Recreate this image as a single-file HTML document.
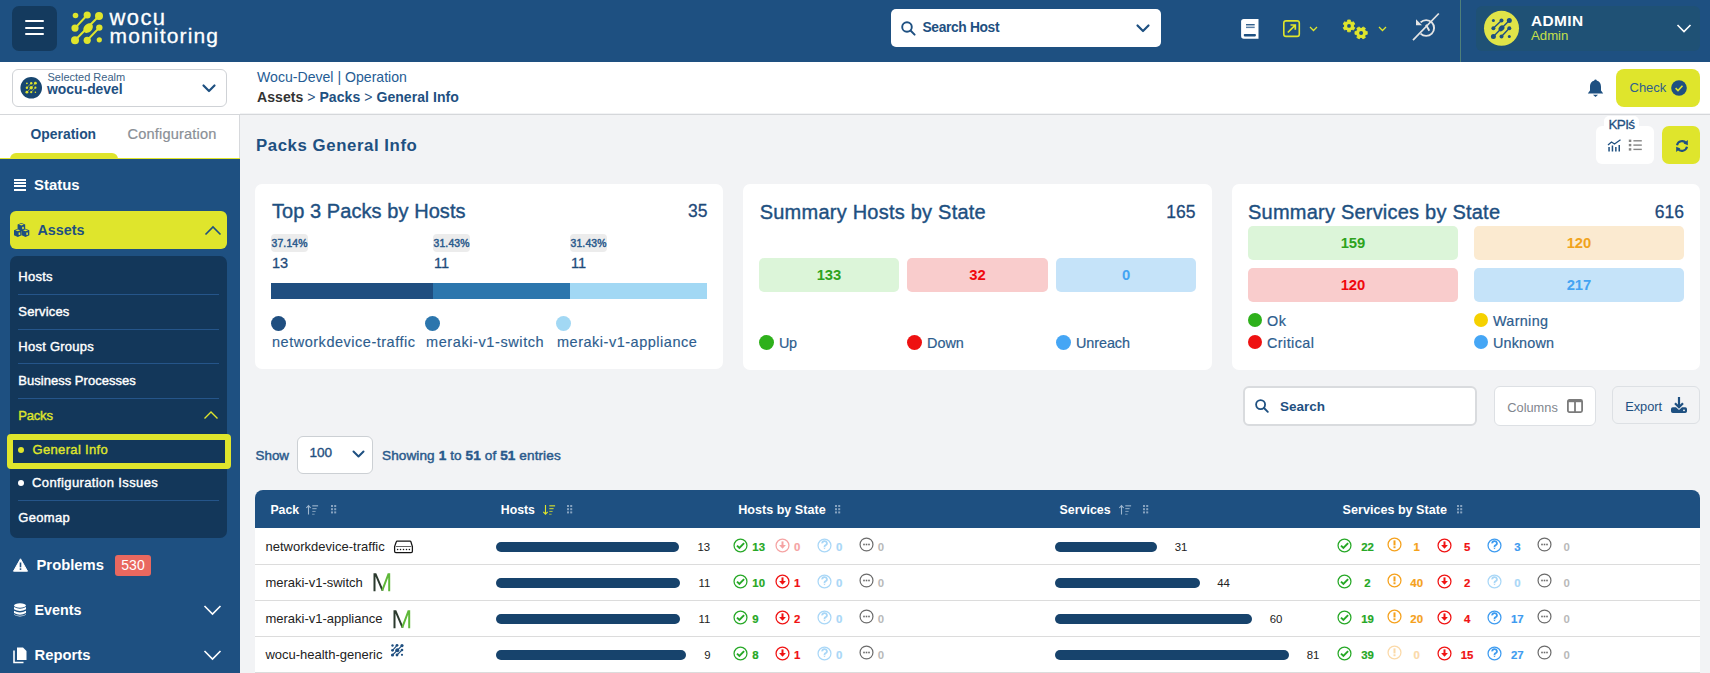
<!DOCTYPE html>
<html><head><meta charset="utf-8"><style>
html,body{margin:0;padding:0;width:1710px;height:673px;overflow:hidden;background:#f2f3f5;font-family:"Liberation Sans",sans-serif;}
.t{position:absolute;line-height:1;white-space:nowrap;}
.r{position:absolute;}
svg.r{overflow:visible}
</style></head><body>
<div class="r" style="left:0px;top:0px;width:1710px;height:62px;background:#1e5081;"></div>
<div class="r" style="left:12px;top:6px;width:45px;height:45px;background:#143a5e;border-radius:7px"></div>
<div class="r" style="left:25px;top:20px;width:19px;height:2.4px;background:#fff;border-radius:1px"></div>
<div class="r" style="left:25px;top:27px;width:19px;height:2.4px;background:#fff;border-radius:1px"></div>
<div class="r" style="left:25px;top:33px;width:19px;height:2.4px;background:#fff;border-radius:1px"></div>
<svg class="r" style="left:68px;top:8px;" width="40" height="44" viewBox="0 0 40 44">
<g fill="#dfe52c" stroke="#dfe52c">
<circle cx="7.5" cy="7.5" r="2.8" stroke="none"/>
<circle cx="19.2" cy="7" r="3.6" stroke="none"/>
<circle cx="31" cy="8" r="4" stroke="none"/>
<circle cx="7" cy="20.1" r="3.6" stroke="none"/>
<ellipse cx="20.1" cy="20.1" rx="5.5" ry="4" transform="rotate(-45 20.1 20.1)" stroke="none"/>
<circle cx="31.3" cy="19.6" r="3.2" stroke="none"/>
<circle cx="7" cy="32.3" r="4" stroke="none"/>
<circle cx="19.2" cy="32.3" r="3.6" stroke="none"/>
<circle cx="31.3" cy="31.8" r="2.6" stroke="none"/>
<path d="M19.2 7 L7 20.1 M31 8 L7 32.3 M31.3 19.6 L19.2 32.3" stroke-width="2" fill="none"/>
</g></svg>
<div class="t" style="left:109.50px;top:7px;font-size:22px;font-weight:400;color:#fff;-webkit-text-stroke:0.3px #fff;letter-spacing:1.380px;">wocu</div>
<div class="t" style="left:109.50px;top:25px;font-size:21px;font-weight:400;color:#fff;-webkit-text-stroke:0.3px #fff;letter-spacing:1.161px;">monitoring</div>
<div class="r" style="left:891px;top:9px;width:270px;height:38px;background:#fff;border-radius:5px"></div>
<svg class="r" style="left:901px;top:21px;" width="15" height="15" viewBox="0 0 15 15"><circle cx="6" cy="6" r="4.8" fill="none" stroke="#1e5081" stroke-width="1.9"/><path d="M9.5 9.5 L13.6 13.6" stroke="#1e5081" stroke-width="2" stroke-linecap="round"/></svg>
<div class="t" style="left:922.50px;top:21px;font-size:13.8px;font-weight:700;color:#1e5081;letter-spacing:-0.353px;">Search Host</div>
<svg class="r" style="left:1136px;top:24px;" width="14" height="9" viewBox="0 0 14 9"><path d="M1.5 1.5 L7 7 L12.5 1.5" fill="none" stroke="#1e5081" stroke-width="2.2" stroke-linecap="round" stroke-linejoin="round"/></svg>
<svg class="r" style="left:1240px;top:18px;" width="20" height="22" viewBox="0 0 20 22"><path d="M3.8 0.9 H18.5 V20.8 H3.8 A2.7 2.7 0 0 1 1.1 18.1 V3.6 A2.7 2.7 0 0 1 3.8 0.9 Z" fill="#fff"/><rect x="6" y="6.1" width="8.7" height="1.3" fill="#1e5081"/><rect x="6" y="8.6" width="8.7" height="1.5" fill="#5a7fa5"/><rect x="3.8" y="15.9" width="12.1" height="2.5" rx="0.8" fill="#1e5081"/></svg>
<svg class="r" style="left:1282px;top:19px;" width="19" height="19" viewBox="0 0 19 19"><rect x="1.8" y="1.9" width="15.5" height="15.5" rx="2.2" fill="none" stroke="#dfe52c" stroke-width="1.6"/><path d="M5.8 13.5 L13 6.3 M8.5 6 H13.3 V10.8" fill="none" stroke="#dfe52c" stroke-width="1.7"/></svg>
<svg class="r" style="left:1309px;top:26px;" width="9" height="6" viewBox="0 0 9 6"><path d="M1 1 L4.5 4.5 L8 1" fill="none" stroke="#dfe52c" stroke-width="1.3"/></svg>
<svg class="r" style="left:1338px;top:14px;" width="34" height="28" viewBox="0 0 34 28"><polygon points="9.46,7.66 9.63,5.96 12.37,5.96 12.54,7.66 13.90,8.44 15.46,7.74 16.83,10.12 15.45,11.12 15.45,12.68 16.83,13.68 15.46,16.06 13.90,15.36 12.54,16.14 12.37,17.84 9.63,17.84 9.46,16.14 8.10,15.36 6.54,16.06 5.17,13.68 6.55,12.68 6.55,11.12 5.17,10.12 6.54,7.74 8.10,8.44" fill="#dfe52c" stroke="#dfe52c" stroke-width="0.8" stroke-linejoin="round"/><circle cx="11" cy="11.9" r="4.76" fill="#dfe52c"/><circle cx="11" cy="11.9" r="1.9" fill="#1e5081"/><polygon points="27.48,17.31 29.24,17.48 29.24,20.32 27.48,20.49 26.67,21.90 27.40,23.51 24.94,24.92 23.91,23.49 22.29,23.49 21.26,24.92 18.80,23.51 19.53,21.90 18.72,20.49 16.96,20.32 16.96,17.48 18.72,17.31 19.53,15.90 18.80,14.29 21.26,12.88 22.29,14.31 23.91,14.31 24.94,12.88 27.40,14.29 26.67,15.90" fill="#dfe52c" stroke="#dfe52c" stroke-width="0.8" stroke-linejoin="round"/><circle cx="23.1" cy="18.9" r="4.91" fill="#dfe52c"/><circle cx="23.1" cy="18.9" r="2" fill="#1e5081"/></svg>
<svg class="r" style="left:1378px;top:26px;" width="9" height="6" viewBox="0 0 9 6"><path d="M1 1 L4.5 4.5 L8 1" fill="none" stroke="#dfe52c" stroke-width="1.3"/></svg>
<svg class="r" style="left:1405px;top:8px;" width="40" height="38" viewBox="0 0 40 38"><g fill="none" stroke="#e4e4e4" stroke-width="1.9"><path d="M15.6 14.4 A7.9 7.9 0 1 1 15.6 25.6"/><path d="M21 16.8 L24.3 22.8"/><path d="M8 32.2 L33.8 5.5" stroke-width="1.7"/></g><path d="M11 11.2 V17.2 H17 Z" fill="#e4e4e4"/></svg>
<div class="r" style="left:1460px;top:0px;width:1px;height:62px;background:#4f7f7a;"></div>
<div class="r" style="left:1476px;top:6px;width:224px;height:45px;background:#1f5175;border-radius:6px"></div>
<svg class="r" style="left:1484px;top:11px;" width="35" height="35" viewBox="0 0 35 35"><circle cx="17.5" cy="17.3" r="17.5" fill="#e0e448"/><g fill="#1e5081" stroke="#1e5081"><circle cx="9.4" cy="9.5" r="1.5" stroke="none"/><circle cx="17.5" cy="9.5" r="2" stroke="none"/><circle cx="25.3" cy="9.5" r="2.5" stroke="none"/><circle cx="9.4" cy="17.3" r="2" stroke="none"/><ellipse cx="17.5" cy="17.3" rx="3.3" ry="2.5" transform="rotate(-45 17.5 17.3)" stroke="none"/><circle cx="25.3" cy="17.3" r="2" stroke="none"/><circle cx="9.4" cy="25.4" r="2.5" stroke="none"/><circle cx="17.5" cy="25.4" r="2" stroke="none"/><circle cx="25.3" cy="25.4" r="1.5" stroke="none"/><path d="M17.5 9.5 L9.4 17.3 M25.3 9.5 L9.4 25.4 M25.3 17.3 L17.5 25.4" stroke-width="1.4" fill="none"/></g></svg>
<div class="t" style="left:1531.00px;top:13px;font-size:15.4px;font-weight:700;color:#fff;letter-spacing:0.4px">ADMIN</div>
<div class="t" style="left:1531.00px;top:29px;font-size:13.2px;font-weight:400;color:#c6e04a;">Admin</div>
<svg class="r" style="left:1676px;top:23px;" width="16" height="11" viewBox="0 0 16 11"><path d="M1.5 2 L8 8.5 L14.5 2" fill="none" stroke="#fff" stroke-width="1.6"/></svg>
<div class="r" style="left:0px;top:62px;width:240px;height:52px;background:#fff;"></div>
<div class="r" style="left:12px;top:69px;width:215px;height:38px;background:#fff;border:1px solid #cfd2d6;border-radius:6px;box-sizing:border-box"></div>
<svg class="r" style="left:20px;top:77px;" width="22" height="22" viewBox="0 0 22 22"><circle cx="11.2" cy="10.8" r="10.8" fill="#174670"/><g fill="#dfe52c"><circle cx="6.9" cy="6.3" r="0.9"/><circle cx="11.2" cy="6.2" r="1.2"/><circle cx="15.4" cy="6.2" r="1.4"/><circle cx="6.9" cy="10.7" r="1.2"/><circle cx="11.2" cy="10.7" r="1.7"/><circle cx="15.4" cy="10.7" r="1.1"/><circle cx="6.9" cy="15.2" r="1.4"/><circle cx="11.2" cy="15.2" r="1.1"/><circle cx="15.4" cy="15.2" r="0.8"/></g><path d="M11.2 6.2 L6.9 10.7 M15.4 6.2 L6.9 15.2 M15.4 10.7 L11.2 15.2" stroke="#dfe52c" stroke-width="0.7" opacity="0.8"/></svg>
<div class="t" style="left:47.50px;top:72px;font-size:11px;font-weight:400;color:#3b5f86;">Selected Realm</div>
<div class="t" style="left:47.00px;top:83px;font-size:13.9px;font-weight:700;color:#1e5081;">wocu-devel</div>
<svg class="r" style="left:202px;top:84px;" width="14" height="9" viewBox="0 0 14 9"><path d="M1.5 1.5 L7 7 L12.5 1.5" fill="none" stroke="#1e5081" stroke-width="2.2" stroke-linecap="round" stroke-linejoin="round"/></svg>
<div class="r" style="left:0px;top:114px;width:240px;height:1px;background:#d5d7da;"></div>
<div class="r" style="left:0px;top:115px;width:239px;height:43px;background:#fff;"></div>
<div class="r" style="left:239px;top:115px;width:1px;height:43px;background:#d7d9dc;"></div>
<div class="t" style="left:30.50px;top:128px;font-size:13.9px;font-weight:700;color:#1e5081;">Operation</div>
<div class="t" style="left:127.50px;top:127px;font-size:14.6px;font-weight:400;color:#8a8f96;letter-spacing:0.17px;-webkit-text-stroke:0.2px currentColor;">Configuration</div>
<div class="r" style="left:10px;top:153px;width:108px;height:6px;background:#dfe52c;border-radius:6px 6px 0 0"></div>
<div class="r" style="left:0px;top:158px;width:240px;height:1px;background:#dfe52c;"></div>
<div class="r" style="left:0px;top:159px;width:240px;height:514px;background:#1e5081;"></div>
<div class="r" style="left:14px;top:179px;width:12px;height:2.2px;background:#fff;"></div>
<div class="r" style="left:14px;top:182px;width:12px;height:2.2px;background:#fff;"></div>
<div class="r" style="left:14px;top:185px;width:12px;height:2.2px;background:#fff;"></div>
<div class="r" style="left:14px;top:188.5px;width:12px;height:2.6px;background:#fff;"></div>
<div class="t" style="left:34.00px;top:178px;font-size:14.9px;font-weight:700;color:#fff;">Status</div>
<div class="r" style="left:10px;top:211px;width:217px;height:38px;background:#dfe52c;border-radius:6px"></div>
<svg class="r" style="left:14px;top:223px;" width="16" height="14" viewBox="0 0 16 14"><path d="M3.6 1.6 L7.4 0 L11.2 1.6 V6.6 L7.4 8.2 L3.6 6.6 Z" fill="#1e5081"/><path d="M4.9 1.6 L7.4 0.8 L9.9 1.6 L7.4 2.5 Z" fill="#dfe52c"/><rect x="8.2" y="3.8" width="1.6" height="2.4" fill="#dfe52c"/><path d="M0 7.300000000000001 L3.8 5.7 L7.6 7.300000000000001 V12.3 L3.8 13.899999999999999 L0 12.3 Z" fill="#1e5081"/><path d="M1.3 7.300000000000001 L3.8 6.5 L6.3 7.300000000000001 L3.8 8.2 Z" fill="#dfe52c"/><rect x="4.6" y="9.5" width="1.6" height="2.4" fill="#dfe52c"/><path d="M7.7 7.300000000000001 L11.5 5.7 L15.3 7.300000000000001 V12.3 L11.5 13.899999999999999 L7.7 12.3 Z" fill="#1e5081"/><path d="M9.0 7.300000000000001 L11.5 6.5 L14.0 7.300000000000001 L11.5 8.2 Z" fill="#dfe52c"/><rect x="12.3" y="9.5" width="1.6" height="2.4" fill="#dfe52c"/></svg>
<div class="t" style="left:37.50px;top:223px;font-size:14.3px;font-weight:700;color:#1e5081;">Assets</div>
<svg class="r" style="left:204px;top:225px;" width="18" height="11" viewBox="0 0 18 11"><path d="M1.5 9.5 L9 2 L16.5 9.5" fill="none" stroke="#1e5081" stroke-width="1.6"/></svg>
<div class="r" style="left:10px;top:256px;width:217px;height:282px;background:#13375a;border-radius:7px"></div>
<div class="t" style="left:18.30px;top:270px;font-size:13px;font-weight:400;color:#fff;-webkit-text-stroke:0.4px currentColor;letter-spacing:0.242px;">Hosts</div>
<div class="t" style="left:18.30px;top:305px;font-size:13px;font-weight:400;color:#fff;-webkit-text-stroke:0.4px currentColor;letter-spacing:0.164px;">Services</div>
<div class="t" style="left:18.30px;top:340px;font-size:13px;font-weight:400;color:#fff;-webkit-text-stroke:0.4px currentColor;letter-spacing:0.253px;">Host Groups</div>
<div class="t" style="left:18.30px;top:374px;font-size:13px;font-weight:400;color:#fff;-webkit-text-stroke:0.4px currentColor;letter-spacing:0.020px;">Business Processes</div>
<div class="r" style="left:18px;top:294px;width:201px;height:1px;background:#25558a;"></div>
<div class="r" style="left:18px;top:329px;width:201px;height:1px;background:#25558a;"></div>
<div class="r" style="left:18px;top:363px;width:201px;height:1px;background:#25558a;"></div>
<div class="r" style="left:18px;top:398px;width:201px;height:1px;background:#25558a;"></div>
<div class="t" style="left:18.30px;top:409px;font-size:13px;font-weight:400;color:#dfe52c;-webkit-text-stroke:0.4px currentColor;letter-spacing:-0.200px;">Packs</div>
<svg class="r" style="left:203px;top:410px;" width="16" height="10" viewBox="0 0 16 10"><path d="M1.5 8.5 L8 2 L14.5 8.5" fill="none" stroke="#dfe52c" stroke-width="1.4"/></svg>
<div class="r" style="left:7px;top:434px;width:224px;height:35px;background:#13375a;border:6.5px solid #dfe52c;border-radius:4px;box-sizing:border-box"></div>
<div class="r" style="left:18px;top:447px;width:6px;height:6px;background:#dfe52c;border-radius:50%"></div>
<div class="t" style="left:32.50px;top:443px;font-size:13px;font-weight:400;color:#dfe52c;-webkit-text-stroke:0.4px currentColor;letter-spacing:0.341px;">General Info</div>
<div class="r" style="left:18px;top:480px;width:6px;height:6px;background:#fff;border-radius:50%"></div>
<div class="t" style="left:32.00px;top:476px;font-size:13px;font-weight:400;color:#fff;-webkit-text-stroke:0.4px currentColor;letter-spacing:0.384px;">Configuration Issues</div>
<div class="r" style="left:18px;top:500px;width:201px;height:1px;background:#25558a;"></div>
<div class="t" style="left:18.30px;top:511px;font-size:13px;font-weight:400;color:#fff;-webkit-text-stroke:0.4px currentColor;letter-spacing:0.328px;">Geomap</div>
<svg class="r" style="left:13px;top:558px;" width="15" height="14" viewBox="0 0 15 14"><path d="M7.5 0.8 L14.5 13.2 H0.5 Z" fill="#fff" stroke="#fff" stroke-width="1" stroke-linejoin="round"/><rect x="6.7" y="4.5" width="1.6" height="4.8" fill="#1e5081"/><rect x="6.7" y="10.3" width="1.6" height="1.6" fill="#1e5081"/></svg>
<div class="t" style="left:36.50px;top:558px;font-size:14.8px;font-weight:700;color:#fff;">Problems</div>
<div class="r" style="left:115px;top:555px;width:36px;height:21px;background:#e9685f;border-radius:3px"></div>
<div class="t" style="left:115.00px;width:36px;text-align:center;top:558px;font-size:14px;font-weight:400;color:#fff;">530</div>
<svg class="r" style="left:13px;top:603px;" width="14" height="14" viewBox="0 0 14 14"><g fill="#fff"><ellipse cx="7" cy="2.5" rx="6" ry="2.2"/><path d="M1 4 Q7 7.5 13 4 V6.3 Q7 9.8 1 6.3 Z"/><path d="M1 7.8 Q7 11.3 13 7.8 V10 Q7 13.5 1 10 Z"/><path d="M1 11.2 Q7 14.5 13 11.2 V11.8 Q7 15 1 11.8Z"/></g></svg>
<div class="t" style="left:34.50px;top:603px;font-size:14.3px;font-weight:700;color:#fff;">Events</div>
<svg class="r" style="left:203px;top:604px;" width="19" height="12" viewBox="0 0 19 12"><path d="M1.5 2 L9.5 10 L17.5 2" fill="none" stroke="#fff" stroke-width="1.6"/></svg>
<svg class="r" style="left:13px;top:647px;" width="14" height="16" viewBox="0 0 14 16"><path d="M4 0.5 H10 L13.5 4 V13 H4 Z" fill="#fff"/><path d="M1 3.5 V15.5 H10.5" fill="none" stroke="#fff" stroke-width="1.6"/></svg>
<div class="t" style="left:34.50px;top:648px;font-size:14.8px;font-weight:700;color:#fff;">Reports</div>
<svg class="r" style="left:203px;top:649px;" width="19" height="12" viewBox="0 0 19 12"><path d="M1.5 2 L9.5 10 L17.5 2" fill="none" stroke="#fff" stroke-width="1.6"/></svg>
<div class="r" style="left:240px;top:62px;width:1470px;height:51px;background:#fff;"></div>
<div class="r" style="left:240px;top:114px;width:1470px;height:1px;background:#d5d7da;"></div>
<div class="r" style="left:240px;top:115px;width:1470px;height:558px;background:#f2f3f5;"></div>
<div class="t" style="left:257.00px;top:70px;font-size:14.1px;font-weight:400;color:#255c94;">Wocu-Devel | Operation</div>
<div class="t" style="left:257.00px;top:90px;font-size:14.05px;font-weight:700;color:#1e5081;letter-spacing:0.04px"><span style="color:#333">Assets</span> <span style="font-weight:400">&gt;</span> Packs <span style="font-weight:400">&gt;</span> General Info</div>
<svg class="r" style="left:1587px;top:79px;" width="17" height="19" viewBox="0 0 17 19"><path d="M8.5 1.5 C4.5 1.5 3 4.5 3 8 V11.5 L0.8 14.5 H16.2 L14 11.5 V8 C14 4.5 12.5 1.5 8.5 1.5 Z" fill="#1e5081"/><circle cx="8.5" cy="1.6" r="1.2" fill="#1e5081"/><path d="M6 15.8 H11 L8.5 18 Z" fill="#1e5081"/></svg>
<div class="r" style="left:1616px;top:69px;width:84px;height:38px;background:#dfe52c;border-radius:8px"></div>
<div class="t" style="left:1629.50px;top:81px;font-size:13px;font-weight:400;color:#2f5f8c;">Check</div>
<svg class="r" style="left:1671px;top:80px;" width="16" height="16" viewBox="0 0 16 16"><circle cx="8" cy="8" r="7.8" fill="#1e5081"/><path d="M4.6 8.2 L7 10.5 L11.5 5.8" fill="none" stroke="#dfe52c" stroke-width="1.6"/></svg>
<div class="t" style="left:256.00px;top:138px;font-size:16.8px;font-weight:700;color:#1e5081;letter-spacing:0.572px;">Packs General Info</div>
<div class="r" style="left:1596px;top:126px;width:58px;height:38px;background:#fff;border-radius:6px"></div>
<div class="r" style="left:1604px;top:115.5px;width:35px;height:14px;background:#fff;border-radius:5px 5px 0 0"></div>
<div class="t" style="left:1608.50px;top:118px;font-size:13.5px;font-weight:400;color:#1e5081;-webkit-text-stroke:0.3px currentColor;letter-spacing:-0.670px;">KPI&#347;</div>
<svg class="r" style="left:1607px;top:139px;" width="15" height="13" viewBox="0 0 15 13"><path d="M1 6 L4.5 3 L7.5 5 L13.5 0.8" fill="none" stroke="#1e5081" stroke-width="1.3"/><rect x="1.3" y="8" width="1.5" height="4.5" fill="#1e5081"/><rect x="4.7" y="6.5" width="1.5" height="6" fill="#1e5081"/><rect x="8.1" y="8" width="1.5" height="4.5" fill="#1e5081"/><rect x="11.5" y="6" width="1.5" height="6.5" fill="#1e5081"/></svg>
<svg class="r" style="left:1628px;top:139px;" width="15" height="12" viewBox="0 0 15 12"><g fill="#858585"><rect x="0.8" y="0.6" width="2.5" height="2.4"/><rect x="0.8" y="4.9" width="2.5" height="2.4"/><rect x="0.8" y="9.2" width="2.5" height="2.4"/><rect x="5.4" y="1.1" width="8.4" height="1.4"/><rect x="5.4" y="5.4" width="8.4" height="1.4"/><rect x="5.4" y="9.7" width="8.4" height="1.4"/></g></svg>
<div class="r" style="left:1662px;top:126px;width:38px;height:38px;background:#dfe52c;border-radius:7px"></div>
<svg class="r" style="left:1674.5px;top:138.5px;" width="14" height="14" viewBox="0 0 14 14"><g fill="none" stroke="#1e5081" stroke-width="2.1"><path d="M2 6.2 A5.2 5.2 0 0 1 11.2 4.2"/><path d="M12 7.8 A5.2 5.2 0 0 1 2.8 9.8"/></g><path d="M8.6 4.6 L12.8 1 L12.8 6.2 Z" fill="#1e5081"/><path d="M5.4 9.4 L1.2 13 L1.2 7.8 Z" fill="#1e5081"/></svg>
<div class="r" style="left:255px;top:184px;width:468px;height:185px;background:#fff;border-radius:7px"></div>
<div class="t" style="left:272.00px;top:201px;font-size:20px;font-weight:400;color:#1e5081;-webkit-text-stroke:0.4px currentColor;letter-spacing:0.063px;">Top 3 Packs by Hosts</div>
<div class="t" style="left:407.50px;width:300px;text-align:right;top:203px;font-size:17.5px;font-weight:400;color:#1e4a7a;-webkit-text-stroke:0.3px currentColor;">35</div>
<div class="r" style="left:271px;top:234px;width:37px;height:18px;background:#ececec;border-radius:4px"></div>
<div class="t" style="left:271.50px;top:239px;font-size:10.4px;font-weight:400;color:#2a5a8c;-webkit-text-stroke:0.45px currentColor;letter-spacing:0.145px;">37.14%</div>
<div class="t" style="left:272.00px;top:256px;font-size:14.5px;font-weight:400;color:#1e4a7a;-webkit-text-stroke:0.3px currentColor;">13</div>
<div class="r" style="left:433px;top:234px;width:37px;height:18px;background:#ececec;border-radius:4px"></div>
<div class="t" style="left:433.50px;top:239px;font-size:10.4px;font-weight:400;color:#2a5a8c;-webkit-text-stroke:0.45px currentColor;letter-spacing:0.145px;">31.43%</div>
<div class="t" style="left:434.00px;top:256px;font-size:14.5px;font-weight:400;color:#1e4a7a;-webkit-text-stroke:0.3px currentColor;">11</div>
<div class="r" style="left:570px;top:234px;width:37px;height:18px;background:#ececec;border-radius:4px"></div>
<div class="t" style="left:570.50px;top:239px;font-size:10.4px;font-weight:400;color:#2a5a8c;-webkit-text-stroke:0.45px currentColor;letter-spacing:0.145px;">31.43%</div>
<div class="t" style="left:571.00px;top:256px;font-size:14.5px;font-weight:400;color:#1e4a7a;-webkit-text-stroke:0.3px currentColor;">11</div>
<div class="r" style="left:271px;top:283px;width:162px;height:16px;background:#1f4e80;"></div>
<div class="r" style="left:433px;top:283px;width:137px;height:16px;background:#2c76ad;"></div>
<div class="r" style="left:570px;top:283px;width:137px;height:16px;background:#a2d8f4;"></div>
<div class="r" style="left:271px;top:316px;width:15px;height:15px;background:#1f4e80;border-radius:50%"></div>
<div class="t" style="left:272.00px;top:335px;font-size:14.5px;font-weight:400;color:#2d5d8e;-webkit-text-stroke:0.15px currentColor;letter-spacing:0.515px;">networkdevice-traffic</div>
<div class="r" style="left:425px;top:316px;width:15px;height:15px;background:#2c76ad;border-radius:50%"></div>
<div class="t" style="left:426.00px;top:335px;font-size:14.5px;font-weight:400;color:#2d5d8e;-webkit-text-stroke:0.15px currentColor;letter-spacing:0.595px;">meraki-v1-switch</div>
<div class="r" style="left:556px;top:316px;width:15px;height:15px;background:#a2d8f4;border-radius:50%"></div>
<div class="t" style="left:557.00px;top:335px;font-size:14.5px;font-weight:400;color:#2d5d8e;-webkit-text-stroke:0.15px currentColor;letter-spacing:0.513px;">meraki-v1-appliance</div>
<div class="r" style="left:743px;top:184px;width:469px;height:186px;background:#fff;border-radius:7px"></div>
<div class="t" style="left:759.70px;top:202px;font-size:20px;font-weight:400;color:#1e5081;-webkit-text-stroke:0.4px currentColor;letter-spacing:0.229px;">Summary Hosts by State</div>
<div class="t" style="left:895.50px;width:300px;text-align:right;top:204px;font-size:17.5px;font-weight:400;color:#1e4a7a;-webkit-text-stroke:0.3px currentColor;">165</div>
<div class="r" style="left:759px;top:258px;width:140px;height:34px;background:#dcf5d9;border-radius:5px"></div>
<div class="t" style="left:759.00px;width:140px;text-align:center;top:268px;font-size:14.8px;font-weight:700;color:#2ea31e;">133</div>
<div class="r" style="left:907px;top:258px;width:141px;height:34px;background:#f9cccc;border-radius:5px"></div>
<div class="t" style="left:907.00px;width:141px;text-align:center;top:268px;font-size:14.8px;font-weight:700;color:#f0080e;">32</div>
<div class="r" style="left:1056px;top:258px;width:140px;height:34px;background:#c5e3f9;border-radius:5px"></div>
<div class="t" style="left:1056.00px;width:140px;text-align:center;top:268px;font-size:14.8px;font-weight:700;color:#44a4f2;">0</div>
<div class="r" style="left:759px;top:335px;width:15px;height:15px;background:#2eb01b;border-radius:50%"></div>
<div class="t" style="left:779.00px;top:336px;font-size:14.4px;font-weight:400;color:#2d5d8e;-webkit-text-stroke:0.2px currentColor;letter-spacing:-0.408px;">Up</div>
<div class="r" style="left:907px;top:335px;width:15px;height:15px;background:#ee1111;border-radius:50%"></div>
<div class="t" style="left:927.00px;top:336px;font-size:14.4px;font-weight:400;color:#2d5d8e;-webkit-text-stroke:0.2px currentColor;letter-spacing:-0.006px;">Down</div>
<div class="r" style="left:1056px;top:335px;width:15px;height:15px;background:#45a6f5;border-radius:50%"></div>
<div class="t" style="left:1076.00px;top:336px;font-size:14.4px;font-weight:400;color:#2d5d8e;-webkit-text-stroke:0.2px currentColor;letter-spacing:-0.072px;">Unreach</div>
<div class="r" style="left:1232px;top:184px;width:468px;height:186px;background:#fff;border-radius:7px"></div>
<div class="t" style="left:1248.00px;top:202px;font-size:20px;font-weight:400;color:#1e5081;-webkit-text-stroke:0.4px currentColor;letter-spacing:0.219px;">Summary Services by State</div>
<div class="t" style="left:1384.00px;width:300px;text-align:right;top:204px;font-size:17.5px;font-weight:400;color:#1e4a7a;-webkit-text-stroke:0.3px currentColor;">616</div>
<div class="r" style="left:1248px;top:226px;width:210px;height:34px;background:#dcf5d9;border-radius:5px"></div>
<div class="t" style="left:1248.00px;width:210px;text-align:center;top:236px;font-size:14.8px;font-weight:700;color:#2ea31e;">159</div>
<div class="r" style="left:1474px;top:226px;width:210px;height:34px;background:#fbead0;border-radius:5px"></div>
<div class="t" style="left:1474.00px;width:210px;text-align:center;top:236px;font-size:14.8px;font-weight:700;color:#f0a31c;">120</div>
<div class="r" style="left:1248px;top:268px;width:210px;height:34px;background:#f9cccc;border-radius:5px"></div>
<div class="t" style="left:1248.00px;width:210px;text-align:center;top:278px;font-size:14.8px;font-weight:700;color:#f0080e;">120</div>
<div class="r" style="left:1474px;top:268px;width:210px;height:34px;background:#c5e3f9;border-radius:5px"></div>
<div class="t" style="left:1474.00px;width:210px;text-align:center;top:278px;font-size:14.8px;font-weight:700;color:#44a4f2;">217</div>
<div class="r" style="left:1248px;top:313px;width:14px;height:14px;background:#2eb01b;border-radius:50%"></div>
<div class="t" style="left:1267.00px;top:314px;font-size:14.4px;font-weight:400;color:#2d5d8e;-webkit-text-stroke:0.2px currentColor;letter-spacing:0.599px;">Ok</div>
<div class="r" style="left:1248px;top:335px;width:14px;height:14px;background:#ee1111;border-radius:50%"></div>
<div class="t" style="left:1267.00px;top:336px;font-size:14.4px;font-weight:400;color:#2d5d8e;-webkit-text-stroke:0.2px currentColor;letter-spacing:0.428px;">Critical</div>
<div class="r" style="left:1474px;top:313px;width:14px;height:14px;background:#f5d100;border-radius:50%"></div>
<div class="t" style="left:1493.00px;top:314px;font-size:14.4px;font-weight:400;color:#2d5d8e;-webkit-text-stroke:0.2px currentColor;letter-spacing:0.319px;">Warning</div>
<div class="r" style="left:1474px;top:335px;width:14px;height:14px;background:#45a6f5;border-radius:50%"></div>
<div class="t" style="left:1493.00px;top:336px;font-size:14.4px;font-weight:400;color:#2d5d8e;-webkit-text-stroke:0.2px currentColor;letter-spacing:0.161px;">Unknown</div>
<div class="r" style="left:1243px;top:386px;width:234px;height:40px;background:#fff;border:2px solid #d9dbde;border-radius:6px;box-sizing:border-box"></div>
<svg class="r" style="left:1255px;top:399px;" width="14" height="14" viewBox="0 0 14 14"><circle cx="5.6" cy="5.6" r="4.5" fill="none" stroke="#1e5081" stroke-width="1.8"/><path d="M9 9 L12.8 12.8" stroke="#1e5081" stroke-width="1.9" stroke-linecap="round"/></svg>
<div class="t" style="left:1280.00px;top:400px;font-size:13.5px;font-weight:700;color:#1e5081;">Search</div>
<div class="r" style="left:1494px;top:386px;width:102px;height:40px;background:#fff;border:1px solid #dde0e4;border-radius:6px;box-sizing:border-box"></div>
<div class="t" style="left:1507.30px;top:402px;font-size:12.8px;font-weight:400;color:#7f868e;">Columns</div>
<svg class="r" style="left:1567px;top:399px;" width="16" height="14" viewBox="0 0 16 14"><rect x="0.9" y="0.9" width="14.2" height="12.2" rx="1.5" fill="none" stroke="#7b7b7b" stroke-width="1.8"/><rect x="7.1" y="1" width="1.8" height="12" fill="#7b7b7b"/><rect x="1" y="1" width="14" height="2.2" fill="#7b7b7b"/></svg>
<div class="r" style="left:1612px;top:386px;width:88px;height:38px;background:#f2f3f5;border:1px solid #dde0e4;border-radius:6px;box-sizing:border-box"></div>
<div class="t" style="left:1625.20px;top:401px;font-size:12.8px;font-weight:400;color:#1e5081;">Export</div>
<svg class="r" style="left:1670px;top:396px;" width="18" height="18" viewBox="0 0 18 18"><path d="M9 1 V11 M5 7.2 L9 11.2 L13 7.2" fill="none" stroke="#1e5081" stroke-width="2.2"/><path d="M2.8 11.3 H6 L9 14 L12 11.3 H15.2 A1.8 1.8 0 0 1 17 13.1 V15.2 A1.8 1.8 0 0 1 15.2 17 H2.8 A1.8 1.8 0 0 1 1 15.2 V13.1 A1.8 1.8 0 0 1 2.8 11.3 Z" fill="#1e5081"/><circle cx="14" cy="14.3" r="0.9" fill="#fff"/></svg>
<div class="t" style="left:255.50px;top:449px;font-size:13.4px;font-weight:400;color:#2a5a8c;-webkit-text-stroke:0.45px currentColor;">Show</div>
<div class="r" style="left:297px;top:436px;width:76px;height:38px;background:#fff;border:1px solid #ccd0d4;border-radius:6px;box-sizing:border-box"></div>
<div class="t" style="left:309.50px;top:446px;font-size:13.6px;font-weight:400;color:#1f4f80;-webkit-text-stroke:0.35px currentColor;">100</div>
<svg class="r" style="left:351.5px;top:450px;" width="13" height="9" viewBox="0 0 13 9"><path d="M1.5 1.5 L6.5 6.5 L11.5 1.5" fill="none" stroke="#1e5081" stroke-width="2" stroke-linecap="round" stroke-linejoin="round"/></svg>
<div class="t" style="left:382.00px;top:449px;font-size:13.6px;font-weight:400;color:#2a5a8c;-webkit-text-stroke:0.45px currentColor;letter-spacing:0.09px;">Showing <b>1</b> to <b>51</b> of <b>51</b> entries</div>
<div class="r" style="left:255px;top:490px;width:1445px;height:38px;background:#1e5081;border-radius:8px 8px 0 0"></div>
<div class="t" style="left:270.40px;top:504px;font-size:12.3px;font-weight:700;color:#fff;">Pack</div>
<svg class="r" style="left:306px;top:504.5px;" width="13" height="10" viewBox="0 0 13 10"><path d="M2.5 9.5 V0.6 M0.3 3 L2.5 0.6 L4.7 3" fill="none" stroke="#9fb7cf" stroke-width="1.1"/><rect x="6.3" y="0.3" width="5.8" height="1.1" fill="#9fb7cf"/><rect x="6.3" y="3.1" width="4.3" height="1.1" fill="#9fb7cf" opacity="0.85"/><rect x="6.3" y="5.9" width="3.3" height="1.1" fill="#9fb7cf" opacity="0.7"/><rect x="6.1" y="8.7" width="2.5" height="1.1" fill="#9fb7cf" opacity="0.6"/></svg>
<svg class="r" style="left:330.5px;top:505px;" width="6" height="9" viewBox="0 0 6 9"><rect x="0" y="0" width="2" height="2" fill="#87a3c0"/><rect x="0" y="3.2" width="2" height="2" fill="#87a3c0"/><rect x="0" y="6.4" width="2" height="2" fill="#87a3c0"/><rect x="3.2" y="0" width="2" height="2" fill="#87a3c0"/><rect x="3.2" y="3.2" width="2" height="2" fill="#87a3c0"/><rect x="3.2" y="6.4" width="2" height="2" fill="#87a3c0"/></svg>
<div class="t" style="left:500.80px;top:504px;font-size:12.3px;font-weight:700;color:#fff;">Hosts</div>
<svg class="r" style="left:542.5px;top:504.5px;" width="13" height="10" viewBox="0 0 13 10"><path d="M2.5 0 V9.2 M0.3 6.8 L2.5 9.2 L4.7 6.8" fill="none" stroke="#dfe52c" stroke-width="1.1"/><rect x="6.3" y="0.3" width="5.8" height="1.1" fill="#dfe52c"/><rect x="6.3" y="3.1" width="4.3" height="1.1" fill="#dfe52c" opacity="0.85"/><rect x="6.3" y="5.9" width="3.3" height="1.1" fill="#dfe52c" opacity="0.7"/><rect x="6.1" y="8.7" width="2.5" height="1.1" fill="#dfe52c" opacity="0.6"/></svg>
<svg class="r" style="left:567px;top:505px;" width="6" height="9" viewBox="0 0 6 9"><rect x="0" y="0" width="2" height="2" fill="#87a3c0"/><rect x="0" y="3.2" width="2" height="2" fill="#87a3c0"/><rect x="0" y="6.4" width="2" height="2" fill="#87a3c0"/><rect x="3.2" y="0" width="2" height="2" fill="#87a3c0"/><rect x="3.2" y="3.2" width="2" height="2" fill="#87a3c0"/><rect x="3.2" y="6.4" width="2" height="2" fill="#87a3c0"/></svg>
<div class="t" style="left:738.20px;top:504px;font-size:12.6px;font-weight:700;color:#fff;">Hosts by State</div>
<svg class="r" style="left:835px;top:505px;" width="6" height="9" viewBox="0 0 6 9"><rect x="0" y="0" width="2" height="2" fill="#87a3c0"/><rect x="0" y="3.2" width="2" height="2" fill="#87a3c0"/><rect x="0" y="6.4" width="2" height="2" fill="#87a3c0"/><rect x="3.2" y="0" width="2" height="2" fill="#87a3c0"/><rect x="3.2" y="3.2" width="2" height="2" fill="#87a3c0"/><rect x="3.2" y="6.4" width="2" height="2" fill="#87a3c0"/></svg>
<div class="t" style="left:1059.60px;top:504px;font-size:12.4px;font-weight:700;color:#fff;">Services</div>
<svg class="r" style="left:1118.5px;top:504.5px;" width="13" height="10" viewBox="0 0 13 10"><path d="M2.5 9.5 V0.6 M0.3 3 L2.5 0.6 L4.7 3" fill="none" stroke="#9fb7cf" stroke-width="1.1"/><rect x="6.3" y="0.3" width="5.8" height="1.1" fill="#9fb7cf"/><rect x="6.3" y="3.1" width="4.3" height="1.1" fill="#9fb7cf" opacity="0.85"/><rect x="6.3" y="5.9" width="3.3" height="1.1" fill="#9fb7cf" opacity="0.7"/><rect x="6.1" y="8.7" width="2.5" height="1.1" fill="#9fb7cf" opacity="0.6"/></svg>
<svg class="r" style="left:1143px;top:505px;" width="6" height="9" viewBox="0 0 6 9"><rect x="0" y="0" width="2" height="2" fill="#87a3c0"/><rect x="0" y="3.2" width="2" height="2" fill="#87a3c0"/><rect x="0" y="6.4" width="2" height="2" fill="#87a3c0"/><rect x="3.2" y="0" width="2" height="2" fill="#87a3c0"/><rect x="3.2" y="3.2" width="2" height="2" fill="#87a3c0"/><rect x="3.2" y="6.4" width="2" height="2" fill="#87a3c0"/></svg>
<div class="t" style="left:1342.60px;top:504px;font-size:12.6px;font-weight:700;color:#fff;">Services by State</div>
<svg class="r" style="left:1457px;top:505px;" width="6" height="9" viewBox="0 0 6 9"><rect x="0" y="0" width="2" height="2" fill="#87a3c0"/><rect x="0" y="3.2" width="2" height="2" fill="#87a3c0"/><rect x="0" y="6.4" width="2" height="2" fill="#87a3c0"/><rect x="3.2" y="0" width="2" height="2" fill="#87a3c0"/><rect x="3.2" y="3.2" width="2" height="2" fill="#87a3c0"/><rect x="3.2" y="6.4" width="2" height="2" fill="#87a3c0"/></svg>
<div class="r" style="left:255px;top:528px;width:1445px;height:145px;background:#fff;"></div>
<div class="r" style="left:255px;top:564px;width:1445px;height:1px;background:#dcdcdc;"></div>
<div class="t" style="left:265.40px;top:540px;font-size:13px;font-weight:400;color:#222;letter-spacing:0.016px;">networkdevice-traffic</div>
<div class="r" style="left:495.6px;top:542px;width:183.29999999999995px;height:10px;background:#17436c;border-radius:5px"></div>
<div class="t" style="left:697.50px;top:542px;font-size:11.4px;font-weight:400;color:#222;">13</div>
<div class="r" style="left:1055px;top:542px;width:102px;height:10px;background:#17436c;border-radius:5px"></div>
<div class="t" style="left:1174.70px;top:542px;font-size:11.4px;font-weight:400;color:#222;">31</div>
<svg class="r" style="left:733px;top:537.95px;" width="15" height="15" viewBox="0 0 15 15"><circle cx="7.5" cy="7.5" r="6.45" fill="none" stroke="#26a826" stroke-width="1.25"/><path d="M4 7.6 L6.4 10 L11.1 5.1" fill="none" stroke="#26a826" stroke-width="1.9"/></svg>
<div class="t" style="left:752.30px;top:542px;font-size:11.4px;font-weight:700;color:#26a826;-webkit-text-stroke:0.2px currentColor;">13</div>
<svg class="r" style="left:775px;top:537.95px;" width="15" height="15" viewBox="0 0 15 15"><circle cx="7.5" cy="7.5" r="6.45" fill="none" stroke="#f5a3a3" stroke-width="1.25"/><path d="M7.5 3.4 V8.2" stroke="#f5a3a3" stroke-width="2"/><path d="M4.1 7.1 H10.9 L7.5 10.8 Z" fill="#f5a3a3"/></svg>
<div class="t" style="left:794.00px;top:542px;font-size:11.4px;font-weight:700;color:#f5a3a3;-webkit-text-stroke:0.2px currentColor;">0</div>
<svg class="r" style="left:816.85px;top:537.95px;" width="15" height="15" viewBox="0 0 15 15"><circle cx="7.5" cy="7.5" r="6.45" fill="none" stroke="#a9d7f7" stroke-width="1.25"/><path d="M5.2 5.4 A2.35 2.2 0 1 1 8.3 7.4 C7.7 7.7 7.5 8.1 7.5 9" fill="none" stroke="#a9d7f7" stroke-width="1.8"/><path d="M6.3 9.8 H8.7 L7.5 11.3 Z" fill="#a9d7f7"/></svg>
<div class="t" style="left:836.00px;top:542px;font-size:11.4px;font-weight:700;color:#a9d7f7;-webkit-text-stroke:0.2px currentColor;">0</div>
<svg class="r" style="left:859.15px;top:537.05px;" width="15" height="15" viewBox="0 0 15 15"><circle cx="7.5" cy="7.5" r="6.45" fill="none" stroke="#6b6b6b" stroke-width="1.2"/><rect x="4.2" y="6.7" width="1.6" height="1.6" fill="#6b6b6b"/><rect x="6.7" y="6.7" width="1.6" height="1.6" fill="#6b6b6b"/><rect x="9.2" y="6.7" width="1.6" height="1.6" fill="#6b6b6b"/></svg>
<div class="t" style="left:877.70px;top:542px;font-size:11.4px;font-weight:700;color:#b9b9b9;">0</div>
<svg class="r" style="left:1337.1px;top:538.1px;" width="15" height="15" viewBox="0 0 15 15"><circle cx="7.5" cy="7.5" r="6.45" fill="none" stroke="#26a826" stroke-width="1.25"/><path d="M4 7.6 L6.4 10 L11.1 5.1" fill="none" stroke="#26a826" stroke-width="1.9"/></svg>
<div class="t" style="left:1352.50px;width:30px;text-align:center;top:542px;font-size:11.4px;font-weight:700;color:#26a826;-webkit-text-stroke:0.2px currentColor;">22</div>
<svg class="r" style="left:1387.25px;top:537.25px;" width="15" height="15" viewBox="0 0 15 15"><circle cx="7.5" cy="7.5" r="6.45" fill="none" stroke="#f5a11c" stroke-width="1.25"/><rect x="6.5" y="3.4" width="2" height="5" fill="#f5a11c"/><rect x="6.5" y="9.3" width="2" height="1.9" fill="#f5a11c"/></svg>
<div class="t" style="left:1401.70px;width:30px;text-align:center;top:542px;font-size:11.4px;font-weight:700;color:#f5a11c;-webkit-text-stroke:0.2px currentColor;">1</div>
<svg class="r" style="left:1437.05px;top:538.1px;" width="15" height="15" viewBox="0 0 15 15"><circle cx="7.5" cy="7.5" r="6.45" fill="none" stroke="#f01212" stroke-width="1.25"/><path d="M7.5 3.4 V8.2" stroke="#f01212" stroke-width="2"/><path d="M4.1 7.1 H10.9 L7.5 10.8 Z" fill="#f01212"/></svg>
<div class="t" style="left:1452.10px;width:30px;text-align:center;top:542px;font-size:11.4px;font-weight:700;color:#f01212;-webkit-text-stroke:0.2px currentColor;">5</div>
<svg class="r" style="left:1486.95px;top:538.1px;" width="15" height="15" viewBox="0 0 15 15"><circle cx="7.5" cy="7.5" r="6.45" fill="none" stroke="#3d9bf0" stroke-width="1.25"/><path d="M5.2 5.4 A2.35 2.2 0 1 1 8.3 7.4 C7.7 7.7 7.5 8.1 7.5 9" fill="none" stroke="#3d9bf0" stroke-width="1.8"/><path d="M6.3 9.8 H8.7 L7.5 11.3 Z" fill="#3d9bf0"/></svg>
<div class="t" style="left:1502.30px;width:30px;text-align:center;top:542px;font-size:11.4px;font-weight:700;color:#3d9bf0;-webkit-text-stroke:0.2px currentColor;">3</div>
<svg class="r" style="left:1537.25px;top:537.15px;" width="15" height="15" viewBox="0 0 15 15"><circle cx="7.5" cy="7.5" r="6.45" fill="none" stroke="#6b6b6b" stroke-width="1.2"/><rect x="4.2" y="6.7" width="1.6" height="1.6" fill="#6b6b6b"/><rect x="6.7" y="6.7" width="1.6" height="1.6" fill="#6b6b6b"/><rect x="9.2" y="6.7" width="1.6" height="1.6" fill="#6b6b6b"/></svg>
<div class="t" style="left:1551.70px;width:30px;text-align:center;top:542px;font-size:11.4px;font-weight:700;color:#b9b9b9;">0</div>
<div class="r" style="left:255px;top:600px;width:1445px;height:1px;background:#dcdcdc;"></div>
<div class="t" style="left:265.40px;top:576px;font-size:13px;font-weight:400;color:#222;letter-spacing:-0.008px;">meraki-v1-switch</div>
<div class="r" style="left:495.6px;top:578px;width:184.39999999999998px;height:10px;background:#17436c;border-radius:5px"></div>
<div class="t" style="left:698.60px;top:578px;font-size:11.4px;font-weight:400;color:#222;">11</div>
<div class="r" style="left:1055px;top:578px;width:144.5px;height:10px;background:#17436c;border-radius:5px"></div>
<div class="t" style="left:1217.20px;top:578px;font-size:11.4px;font-weight:400;color:#222;">44</div>
<svg class="r" style="left:733px;top:573.95px;" width="15" height="15" viewBox="0 0 15 15"><circle cx="7.5" cy="7.5" r="6.45" fill="none" stroke="#26a826" stroke-width="1.25"/><path d="M4 7.6 L6.4 10 L11.1 5.1" fill="none" stroke="#26a826" stroke-width="1.9"/></svg>
<div class="t" style="left:752.30px;top:578px;font-size:11.4px;font-weight:700;color:#26a826;-webkit-text-stroke:0.2px currentColor;">10</div>
<svg class="r" style="left:775px;top:573.95px;" width="15" height="15" viewBox="0 0 15 15"><circle cx="7.5" cy="7.5" r="6.45" fill="none" stroke="#f01212" stroke-width="1.25"/><path d="M7.5 3.4 V8.2" stroke="#f01212" stroke-width="2"/><path d="M4.1 7.1 H10.9 L7.5 10.8 Z" fill="#f01212"/></svg>
<div class="t" style="left:794.00px;top:578px;font-size:11.4px;font-weight:700;color:#f01212;-webkit-text-stroke:0.2px currentColor;">1</div>
<svg class="r" style="left:816.85px;top:573.95px;" width="15" height="15" viewBox="0 0 15 15"><circle cx="7.5" cy="7.5" r="6.45" fill="none" stroke="#a9d7f7" stroke-width="1.25"/><path d="M5.2 5.4 A2.35 2.2 0 1 1 8.3 7.4 C7.7 7.7 7.5 8.1 7.5 9" fill="none" stroke="#a9d7f7" stroke-width="1.8"/><path d="M6.3 9.8 H8.7 L7.5 11.3 Z" fill="#a9d7f7"/></svg>
<div class="t" style="left:836.00px;top:578px;font-size:11.4px;font-weight:700;color:#a9d7f7;-webkit-text-stroke:0.2px currentColor;">0</div>
<svg class="r" style="left:859.15px;top:573.05px;" width="15" height="15" viewBox="0 0 15 15"><circle cx="7.5" cy="7.5" r="6.45" fill="none" stroke="#6b6b6b" stroke-width="1.2"/><rect x="4.2" y="6.7" width="1.6" height="1.6" fill="#6b6b6b"/><rect x="6.7" y="6.7" width="1.6" height="1.6" fill="#6b6b6b"/><rect x="9.2" y="6.7" width="1.6" height="1.6" fill="#6b6b6b"/></svg>
<div class="t" style="left:877.70px;top:578px;font-size:11.4px;font-weight:700;color:#b9b9b9;">0</div>
<svg class="r" style="left:1337.1px;top:574.1px;" width="15" height="15" viewBox="0 0 15 15"><circle cx="7.5" cy="7.5" r="6.45" fill="none" stroke="#26a826" stroke-width="1.25"/><path d="M4 7.6 L6.4 10 L11.1 5.1" fill="none" stroke="#26a826" stroke-width="1.9"/></svg>
<div class="t" style="left:1352.50px;width:30px;text-align:center;top:578px;font-size:11.4px;font-weight:700;color:#26a826;-webkit-text-stroke:0.2px currentColor;">2</div>
<svg class="r" style="left:1387.25px;top:573.25px;" width="15" height="15" viewBox="0 0 15 15"><circle cx="7.5" cy="7.5" r="6.45" fill="none" stroke="#f5a11c" stroke-width="1.25"/><rect x="6.5" y="3.4" width="2" height="5" fill="#f5a11c"/><rect x="6.5" y="9.3" width="2" height="1.9" fill="#f5a11c"/></svg>
<div class="t" style="left:1401.70px;width:30px;text-align:center;top:578px;font-size:11.4px;font-weight:700;color:#f5a11c;-webkit-text-stroke:0.2px currentColor;">40</div>
<svg class="r" style="left:1437.05px;top:574.1px;" width="15" height="15" viewBox="0 0 15 15"><circle cx="7.5" cy="7.5" r="6.45" fill="none" stroke="#f01212" stroke-width="1.25"/><path d="M7.5 3.4 V8.2" stroke="#f01212" stroke-width="2"/><path d="M4.1 7.1 H10.9 L7.5 10.8 Z" fill="#f01212"/></svg>
<div class="t" style="left:1452.10px;width:30px;text-align:center;top:578px;font-size:11.4px;font-weight:700;color:#f01212;-webkit-text-stroke:0.2px currentColor;">2</div>
<svg class="r" style="left:1486.95px;top:574.1px;" width="15" height="15" viewBox="0 0 15 15"><circle cx="7.5" cy="7.5" r="6.45" fill="none" stroke="#a9d7f7" stroke-width="1.25"/><path d="M5.2 5.4 A2.35 2.2 0 1 1 8.3 7.4 C7.7 7.7 7.5 8.1 7.5 9" fill="none" stroke="#a9d7f7" stroke-width="1.8"/><path d="M6.3 9.8 H8.7 L7.5 11.3 Z" fill="#a9d7f7"/></svg>
<div class="t" style="left:1502.30px;width:30px;text-align:center;top:578px;font-size:11.4px;font-weight:700;color:#a9d7f7;-webkit-text-stroke:0.2px currentColor;">0</div>
<svg class="r" style="left:1537.25px;top:573.15px;" width="15" height="15" viewBox="0 0 15 15"><circle cx="7.5" cy="7.5" r="6.45" fill="none" stroke="#6b6b6b" stroke-width="1.2"/><rect x="4.2" y="6.7" width="1.6" height="1.6" fill="#6b6b6b"/><rect x="6.7" y="6.7" width="1.6" height="1.6" fill="#6b6b6b"/><rect x="9.2" y="6.7" width="1.6" height="1.6" fill="#6b6b6b"/></svg>
<div class="t" style="left:1551.70px;width:30px;text-align:center;top:578px;font-size:11.4px;font-weight:700;color:#b9b9b9;">0</div>
<div class="r" style="left:255px;top:636px;width:1445px;height:1px;background:#dcdcdc;"></div>
<div class="t" style="left:265.40px;top:612px;font-size:13px;font-weight:400;color:#222;letter-spacing:-0.003px;">meraki-v1-appliance</div>
<div class="r" style="left:495.6px;top:614px;width:184.39999999999998px;height:10px;background:#17436c;border-radius:5px"></div>
<div class="t" style="left:698.60px;top:614px;font-size:11.4px;font-weight:400;color:#222;">11</div>
<div class="r" style="left:1055px;top:614px;width:197px;height:10px;background:#17436c;border-radius:5px"></div>
<div class="t" style="left:1269.70px;top:614px;font-size:11.4px;font-weight:400;color:#222;">60</div>
<svg class="r" style="left:733px;top:609.95px;" width="15" height="15" viewBox="0 0 15 15"><circle cx="7.5" cy="7.5" r="6.45" fill="none" stroke="#26a826" stroke-width="1.25"/><path d="M4 7.6 L6.4 10 L11.1 5.1" fill="none" stroke="#26a826" stroke-width="1.9"/></svg>
<div class="t" style="left:752.30px;top:614px;font-size:11.4px;font-weight:700;color:#26a826;-webkit-text-stroke:0.2px currentColor;">9</div>
<svg class="r" style="left:775px;top:609.95px;" width="15" height="15" viewBox="0 0 15 15"><circle cx="7.5" cy="7.5" r="6.45" fill="none" stroke="#f01212" stroke-width="1.25"/><path d="M7.5 3.4 V8.2" stroke="#f01212" stroke-width="2"/><path d="M4.1 7.1 H10.9 L7.5 10.8 Z" fill="#f01212"/></svg>
<div class="t" style="left:794.00px;top:614px;font-size:11.4px;font-weight:700;color:#f01212;-webkit-text-stroke:0.2px currentColor;">2</div>
<svg class="r" style="left:816.85px;top:609.95px;" width="15" height="15" viewBox="0 0 15 15"><circle cx="7.5" cy="7.5" r="6.45" fill="none" stroke="#a9d7f7" stroke-width="1.25"/><path d="M5.2 5.4 A2.35 2.2 0 1 1 8.3 7.4 C7.7 7.7 7.5 8.1 7.5 9" fill="none" stroke="#a9d7f7" stroke-width="1.8"/><path d="M6.3 9.8 H8.7 L7.5 11.3 Z" fill="#a9d7f7"/></svg>
<div class="t" style="left:836.00px;top:614px;font-size:11.4px;font-weight:700;color:#a9d7f7;-webkit-text-stroke:0.2px currentColor;">0</div>
<svg class="r" style="left:859.15px;top:609.05px;" width="15" height="15" viewBox="0 0 15 15"><circle cx="7.5" cy="7.5" r="6.45" fill="none" stroke="#6b6b6b" stroke-width="1.2"/><rect x="4.2" y="6.7" width="1.6" height="1.6" fill="#6b6b6b"/><rect x="6.7" y="6.7" width="1.6" height="1.6" fill="#6b6b6b"/><rect x="9.2" y="6.7" width="1.6" height="1.6" fill="#6b6b6b"/></svg>
<div class="t" style="left:877.70px;top:614px;font-size:11.4px;font-weight:700;color:#b9b9b9;">0</div>
<svg class="r" style="left:1337.1px;top:610.1px;" width="15" height="15" viewBox="0 0 15 15"><circle cx="7.5" cy="7.5" r="6.45" fill="none" stroke="#26a826" stroke-width="1.25"/><path d="M4 7.6 L6.4 10 L11.1 5.1" fill="none" stroke="#26a826" stroke-width="1.9"/></svg>
<div class="t" style="left:1352.50px;width:30px;text-align:center;top:614px;font-size:11.4px;font-weight:700;color:#26a826;-webkit-text-stroke:0.2px currentColor;">19</div>
<svg class="r" style="left:1387.25px;top:609.25px;" width="15" height="15" viewBox="0 0 15 15"><circle cx="7.5" cy="7.5" r="6.45" fill="none" stroke="#f5a11c" stroke-width="1.25"/><rect x="6.5" y="3.4" width="2" height="5" fill="#f5a11c"/><rect x="6.5" y="9.3" width="2" height="1.9" fill="#f5a11c"/></svg>
<div class="t" style="left:1401.70px;width:30px;text-align:center;top:614px;font-size:11.4px;font-weight:700;color:#f5a11c;-webkit-text-stroke:0.2px currentColor;">20</div>
<svg class="r" style="left:1437.05px;top:610.1px;" width="15" height="15" viewBox="0 0 15 15"><circle cx="7.5" cy="7.5" r="6.45" fill="none" stroke="#f01212" stroke-width="1.25"/><path d="M7.5 3.4 V8.2" stroke="#f01212" stroke-width="2"/><path d="M4.1 7.1 H10.9 L7.5 10.8 Z" fill="#f01212"/></svg>
<div class="t" style="left:1452.10px;width:30px;text-align:center;top:614px;font-size:11.4px;font-weight:700;color:#f01212;-webkit-text-stroke:0.2px currentColor;">4</div>
<svg class="r" style="left:1486.95px;top:610.1px;" width="15" height="15" viewBox="0 0 15 15"><circle cx="7.5" cy="7.5" r="6.45" fill="none" stroke="#3d9bf0" stroke-width="1.25"/><path d="M5.2 5.4 A2.35 2.2 0 1 1 8.3 7.4 C7.7 7.7 7.5 8.1 7.5 9" fill="none" stroke="#3d9bf0" stroke-width="1.8"/><path d="M6.3 9.8 H8.7 L7.5 11.3 Z" fill="#3d9bf0"/></svg>
<div class="t" style="left:1502.30px;width:30px;text-align:center;top:614px;font-size:11.4px;font-weight:700;color:#3d9bf0;-webkit-text-stroke:0.2px currentColor;">17</div>
<svg class="r" style="left:1537.25px;top:609.15px;" width="15" height="15" viewBox="0 0 15 15"><circle cx="7.5" cy="7.5" r="6.45" fill="none" stroke="#6b6b6b" stroke-width="1.2"/><rect x="4.2" y="6.7" width="1.6" height="1.6" fill="#6b6b6b"/><rect x="6.7" y="6.7" width="1.6" height="1.6" fill="#6b6b6b"/><rect x="9.2" y="6.7" width="1.6" height="1.6" fill="#6b6b6b"/></svg>
<div class="t" style="left:1551.70px;width:30px;text-align:center;top:614px;font-size:11.4px;font-weight:700;color:#b9b9b9;">0</div>
<div class="r" style="left:255px;top:672px;width:1445px;height:1px;background:#dcdcdc;"></div>
<div class="t" style="left:265.40px;top:648px;font-size:13px;font-weight:400;color:#222;letter-spacing:-0.004px;">wocu-health-generic</div>
<div class="r" style="left:495.6px;top:650px;width:190.0px;height:10px;background:#17436c;border-radius:5px"></div>
<div class="t" style="left:704.20px;top:650px;font-size:11.4px;font-weight:400;color:#222;">9</div>
<div class="r" style="left:1055px;top:650px;width:234px;height:10px;background:#17436c;border-radius:5px"></div>
<div class="t" style="left:1306.70px;top:650px;font-size:11.4px;font-weight:400;color:#222;">81</div>
<svg class="r" style="left:733px;top:645.95px;" width="15" height="15" viewBox="0 0 15 15"><circle cx="7.5" cy="7.5" r="6.45" fill="none" stroke="#26a826" stroke-width="1.25"/><path d="M4 7.6 L6.4 10 L11.1 5.1" fill="none" stroke="#26a826" stroke-width="1.9"/></svg>
<div class="t" style="left:752.30px;top:650px;font-size:11.4px;font-weight:700;color:#26a826;-webkit-text-stroke:0.2px currentColor;">8</div>
<svg class="r" style="left:775px;top:645.95px;" width="15" height="15" viewBox="0 0 15 15"><circle cx="7.5" cy="7.5" r="6.45" fill="none" stroke="#f01212" stroke-width="1.25"/><path d="M7.5 3.4 V8.2" stroke="#f01212" stroke-width="2"/><path d="M4.1 7.1 H10.9 L7.5 10.8 Z" fill="#f01212"/></svg>
<div class="t" style="left:794.00px;top:650px;font-size:11.4px;font-weight:700;color:#f01212;-webkit-text-stroke:0.2px currentColor;">1</div>
<svg class="r" style="left:816.85px;top:645.95px;" width="15" height="15" viewBox="0 0 15 15"><circle cx="7.5" cy="7.5" r="6.45" fill="none" stroke="#a9d7f7" stroke-width="1.25"/><path d="M5.2 5.4 A2.35 2.2 0 1 1 8.3 7.4 C7.7 7.7 7.5 8.1 7.5 9" fill="none" stroke="#a9d7f7" stroke-width="1.8"/><path d="M6.3 9.8 H8.7 L7.5 11.3 Z" fill="#a9d7f7"/></svg>
<div class="t" style="left:836.00px;top:650px;font-size:11.4px;font-weight:700;color:#a9d7f7;-webkit-text-stroke:0.2px currentColor;">0</div>
<svg class="r" style="left:859.15px;top:645.05px;" width="15" height="15" viewBox="0 0 15 15"><circle cx="7.5" cy="7.5" r="6.45" fill="none" stroke="#6b6b6b" stroke-width="1.2"/><rect x="4.2" y="6.7" width="1.6" height="1.6" fill="#6b6b6b"/><rect x="6.7" y="6.7" width="1.6" height="1.6" fill="#6b6b6b"/><rect x="9.2" y="6.7" width="1.6" height="1.6" fill="#6b6b6b"/></svg>
<div class="t" style="left:877.70px;top:650px;font-size:11.4px;font-weight:700;color:#b9b9b9;">0</div>
<svg class="r" style="left:1337.1px;top:646.1px;" width="15" height="15" viewBox="0 0 15 15"><circle cx="7.5" cy="7.5" r="6.45" fill="none" stroke="#26a826" stroke-width="1.25"/><path d="M4 7.6 L6.4 10 L11.1 5.1" fill="none" stroke="#26a826" stroke-width="1.9"/></svg>
<div class="t" style="left:1352.50px;width:30px;text-align:center;top:650px;font-size:11.4px;font-weight:700;color:#26a826;-webkit-text-stroke:0.2px currentColor;">39</div>
<svg class="r" style="left:1387.25px;top:645.25px;" width="15" height="15" viewBox="0 0 15 15"><circle cx="7.5" cy="7.5" r="6.45" fill="none" stroke="#fbd9a8" stroke-width="1.25"/><rect x="6.5" y="3.4" width="2" height="5" fill="#fbd9a8"/><rect x="6.5" y="9.3" width="2" height="1.9" fill="#fbd9a8"/></svg>
<div class="t" style="left:1401.70px;width:30px;text-align:center;top:650px;font-size:11.4px;font-weight:700;color:#fbd9a8;-webkit-text-stroke:0.2px currentColor;">0</div>
<svg class="r" style="left:1437.05px;top:646.1px;" width="15" height="15" viewBox="0 0 15 15"><circle cx="7.5" cy="7.5" r="6.45" fill="none" stroke="#f01212" stroke-width="1.25"/><path d="M7.5 3.4 V8.2" stroke="#f01212" stroke-width="2"/><path d="M4.1 7.1 H10.9 L7.5 10.8 Z" fill="#f01212"/></svg>
<div class="t" style="left:1452.10px;width:30px;text-align:center;top:650px;font-size:11.4px;font-weight:700;color:#f01212;-webkit-text-stroke:0.2px currentColor;">15</div>
<svg class="r" style="left:1486.95px;top:646.1px;" width="15" height="15" viewBox="0 0 15 15"><circle cx="7.5" cy="7.5" r="6.45" fill="none" stroke="#3d9bf0" stroke-width="1.25"/><path d="M5.2 5.4 A2.35 2.2 0 1 1 8.3 7.4 C7.7 7.7 7.5 8.1 7.5 9" fill="none" stroke="#3d9bf0" stroke-width="1.8"/><path d="M6.3 9.8 H8.7 L7.5 11.3 Z" fill="#3d9bf0"/></svg>
<div class="t" style="left:1502.30px;width:30px;text-align:center;top:650px;font-size:11.4px;font-weight:700;color:#3d9bf0;-webkit-text-stroke:0.2px currentColor;">27</div>
<svg class="r" style="left:1537.25px;top:645.15px;" width="15" height="15" viewBox="0 0 15 15"><circle cx="7.5" cy="7.5" r="6.45" fill="none" stroke="#6b6b6b" stroke-width="1.2"/><rect x="4.2" y="6.7" width="1.6" height="1.6" fill="#6b6b6b"/><rect x="6.7" y="6.7" width="1.6" height="1.6" fill="#6b6b6b"/><rect x="9.2" y="6.7" width="1.6" height="1.6" fill="#6b6b6b"/></svg>
<div class="t" style="left:1551.70px;width:30px;text-align:center;top:650px;font-size:11.4px;font-weight:700;color:#b9b9b9;">0</div>
<svg class="r" style="left:394px;top:540px;" width="20" height="14" viewBox="0 0 20 14"><path d="M3.2 1 H16 A1 1 0 0 1 16.9 1.7 L18.4 6.6 V11.3 A1.3 1.3 0 0 1 17.1 12.6 H1.9 A1.3 1.3 0 0 1 0.6 11.3 V6.6 L2.3 1.7 A1 1 0 0 1 3.2 1 Z" fill="none" stroke="#151515" stroke-width="1.25"/><path d="M1.8 6.5 H17.4" stroke="#555" stroke-width="0.9"/><g fill="#151515"><circle cx="3.6" cy="9.5" r="0.75"/><circle cx="6.5" cy="9.5" r="0.75"/><circle cx="9.5" cy="9.5" r="0.75"/><circle cx="12.5" cy="9.5" r="0.75"/><circle cx="15.4" cy="9.5" r="0.75"/></g></svg>
<svg class="r" style="left:372.7px;top:573.4px;" width="18" height="19" viewBox="0 0 18 19"><path d="M1.5 18.2 V1.2 H2.6 L9.6 17.6" fill="none" stroke="#2b3a2e" stroke-width="2" stroke-linejoin="miter"/><path d="M9.2 17.6 L15.4 1.2 H16.2 V18.2" fill="none" stroke="#5fb83a" stroke-width="2" stroke-linejoin="miter"/></svg>
<svg class="r" style="left:392.7px;top:609.6px;" width="18" height="19" viewBox="0 0 18 19"><path d="M1.5 18.2 V1.2 H2.6 L9.6 17.6" fill="none" stroke="#2b3a2e" stroke-width="2" stroke-linejoin="miter"/><path d="M9.2 17.6 L15.4 1.2 H16.2 V18.2" fill="none" stroke="#5fb83a" stroke-width="2" stroke-linejoin="miter"/></svg>
<svg class="r" style="left:389.8px;top:642.8px;" width="15" height="15" viewBox="0 0 15 15"><g fill="#1f4f80" stroke="#1f4f80"><circle cx="2.5" cy="2.5" r="1.2" stroke="none"/><circle cx="7" cy="2.3" r="1.4" stroke="none"/><circle cx="12" cy="2.6" r="1.6" stroke="none"/><circle cx="2.5" cy="7.3" r="1.4" stroke="none"/><circle cx="7.3" cy="7.3" r="2" stroke="none"/><circle cx="12" cy="7" r="1.3" stroke="none"/><circle cx="2.5" cy="12" r="1.6" stroke="none"/><circle cx="7" cy="12" r="1.4" stroke="none"/><circle cx="12" cy="11.8" r="1.1" stroke="none"/><path d="M7 2.3 L2.5 7.3 M12 2.6 L2.5 12 M12 7 L7 12" stroke-width="1.1" fill="none"/></g></svg>
</body></html>
